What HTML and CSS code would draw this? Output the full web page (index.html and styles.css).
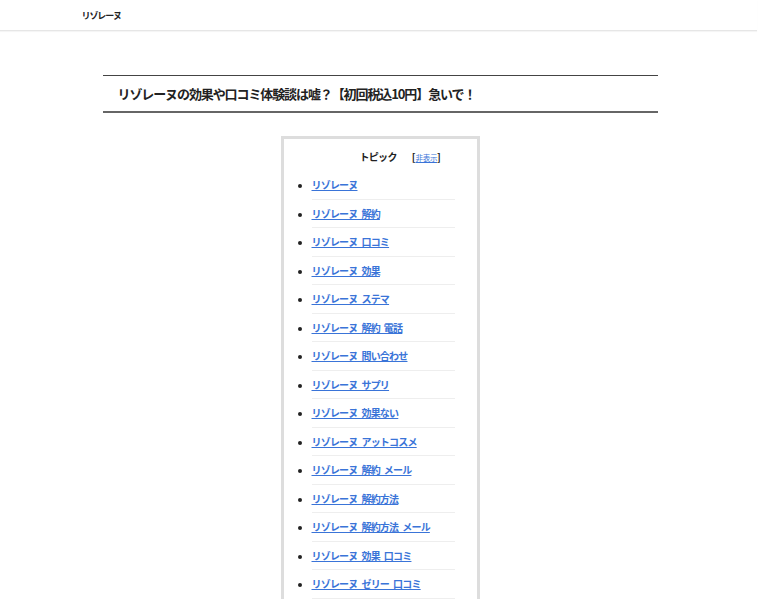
FILE: index.html
```html
<!DOCTYPE html>
<html lang="ja">
<head>
<meta charset="utf-8">
<title>リゾレーヌ</title>
<link rel="stylesheet" href="styles.css">
</head>
<body>
<header class="site-header">
  <div class="header-inner"><a class="site-name" href="#">リゾレーヌ</a></div>
</header>
<main class="content">
  <h1 class="entry-title">リゾレーヌの効果や口コミ体験談は嘘？【初回税込10円】急いで！</h1>
  <div class="toc">
    <p class="toc-title">トピック<span class="toc-toggle">[<a href="#">非表示</a>]</span></p>
    <ul class="toc-list">
      <li><a href="#">リゾレーヌ</a></li>
      <li><a href="#">リゾレーヌ 解約</a></li>
      <li><a href="#">リゾレーヌ 口コミ</a></li>
      <li><a href="#">リゾレーヌ 効果</a></li>
      <li><a href="#">リゾレーヌ ステマ</a></li>
      <li><a href="#">リゾレーヌ 解約 電話</a></li>
      <li><a href="#">リゾレーヌ 問い合わせ</a></li>
      <li><a href="#">リゾレーヌ サプリ</a></li>
      <li><a href="#">リゾレーヌ 効果ない</a></li>
      <li><a href="#">リゾレーヌ アットコスメ</a></li>
      <li><a href="#">リゾレーヌ 解約 メール</a></li>
      <li><a href="#">リゾレーヌ 解約方法</a></li>
      <li><a href="#">リゾレーヌ 解約方法 メール</a></li>
      <li><a href="#">リゾレーヌ 効果 口コミ</a></li>
      <li><a href="#">リゾレーヌ ゼリー 口コミ</a></li>
    </ul>
  </div>
</main>
</body>
</html>
```

FILE: styles.css
```css
html, body {
  margin: 0;
  padding: 0;
  background: #fff;
  color: #222;
  font-family: "Noto Sans CJK JP", "Noto Sans", sans-serif;
}

.site-header {
  height: 30px;
  border-bottom: 1px solid #e6e6e6;
  box-shadow: 0 1px 1px rgba(0,0,0,0.04);
  margin-right: 3px;
}

.header-inner {
  width: 594px;
  margin: 0 auto;
  height: 30px;
  display: flex;
  align-items: center;
}

.site-name {
  font-size: 9px;
  font-weight: bold;
  color: #222;
  text-decoration: none;
  letter-spacing: -1.1px;
}

.content {
  width: 555px;
  margin: 44px auto 0;
}

.entry-title {
  margin: 0;
  font-size: 13px;
  font-weight: bold;
  line-height: 20px;
  padding: 8px 15px 7px;
  border-top: 1px solid #444;
  border-bottom: 2px solid #666;
  letter-spacing: -1.1px;
}

.toc {
  width: 193px;
  margin: 23px auto 0;
  border: 3px solid #ddd;
  border-bottom: none;
  padding: 10px 0 0;
}

.toc-title {
  margin: 0 0 5px;
  padding-left: 76px;
  font-size: 10px;
  font-weight: bold;
  line-height: 16px;
  letter-spacing: -0.7px;
}

.toc-toggle {
  margin-left: 15px;
  font-size: 10px;
  letter-spacing: 0;
}

.toc-toggle a {
  font-size: 7.5px;
  font-weight: normal;
  letter-spacing: -0.3px;
  color: #3a74d8;
}

.toc-list {
  margin: 0;
  padding: 0 0 0 28px;
  width: 143px;
  list-style: disc outside;
}

.toc-list li {
  font-size: 10px;
  font-weight: bold;
  line-height: 16px;
  padding: 6px 0 5.5px;
  border-bottom: 1px solid #eee;
  letter-spacing: -0.8px;
  word-spacing: 2.5px;
}

.toc-list li::marker {
  color: #222;
  font-size: 9.5px;
}

.toc-list a {
  color: #3a74d8;
  text-decoration: underline;
}
```
